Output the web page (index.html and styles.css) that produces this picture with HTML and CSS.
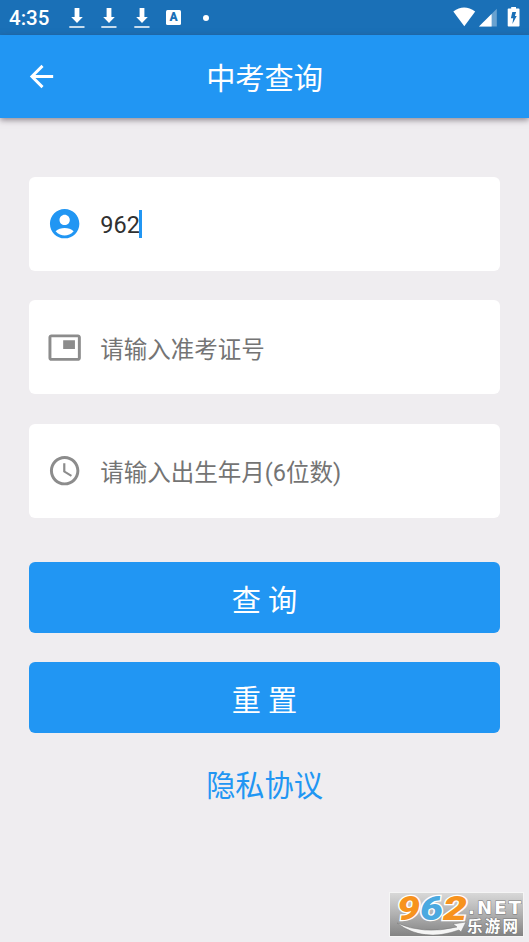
FILE: index.html
```html
<!DOCTYPE html>
<html lang="zh-CN">
<head>
<meta charset="utf-8">
<title>中考查询</title>
<link rel="stylesheet" href="styles.css">
</head>
<body>
<div class="screen">
  <div class="status">
    <span class="time">4:35</span>
    <div class="notes">
      <svg class="dl" viewBox="0 0 16 22"><path d="M5.6 0h4.8v9h3.4L8 15 2.2 9h3.4z"/><path class="dim" d="M.3 18h15.2v2H.3z"/></svg>
      <svg class="dl" viewBox="0 0 16 22"><path d="M5.6 0h4.8v9h3.4L8 15 2.2 9h3.4z"/><path class="dim" d="M.3 18h15.2v2H.3z"/></svg>
      <svg class="dl" viewBox="0 0 16 22"><path d="M5.6 0h4.8v9h3.4L8 15 2.2 9h3.4z"/><path class="dim" d="M.3 18h15.2v2H.3z"/></svg>
      <span class="abox"><span class="a">A</span></span>
      <span class="dot"></span>
    </div>
    <svg class="system" viewBox="0 0 68 22">
      <path d="M.3 4.6Q11-3.6 22.200 4.600L11.300 19.200z"/>
      <path class="faint" d="M26 19.500 43.800 1.700V19.500z"/>
      <path d="M26 19.500 38.600 6.900V19.500z"/>
      <path d="M55.500 1.500h2.700V0h4.800v1.500h2.700q.8 0 .8.800v16.400q0 .8-.8.800H55.500q-.8 0-.8-.8V2.300q0-.8.800-.8z"/>
      <path class="bolt" d="M59.300 5h3.800l-1.200 4h1.800l-4.300 8 .8-5.800h-2.300z"/>
    </svg>
  </div>
  <header class="bar">
    <svg class="back" viewBox="0 0 24 24"><path d="M20 11H7.830l5.590-5.590L12 4l-8 8 8 8 1.410-1.410L7.830 13H20v-2z"/></svg>
    <h1>中考查询</h1>
  </header>
  <main>
    <div class="field">
      <svg class="icon active" viewBox="0 0 24 24"><path d="M12 2C6.480 2 2 6.480 2 12s4.480 10 10 10 10-4.480 10-10S17.520 2 12 2zm0 4c1.930 0 3.500 1.570 3.500 3.500S13.930 13 12 13s-3.500-1.570-3.500-3.500S10.070 6 12 6zm0 14c-2.030 0-4.430-.82-6.140-2.880C7.550 15.800 9.680 15 12 15s4.450.8 6.140 2.120C16.430 19.180 14.030 20 12 20z"/></svg>
      <span class="value">962</span><span class="caret"></span>
    </div>
    <div class="field">
      <svg class="icon" viewBox="0 0 24 24"><path d="M19 7h-8v6h8V7zm2-4H3c-1.100 0-2 .9-2 2v14c0 1.100.9 1.980 2 1.980h18c1.100 0 2-.88 2-1.980V5c0-1.100-.9-2-2-2zm0 16.010H3V4.980h18v14.030z"/></svg>
      <span class="hint">请输入准考证号</span>
    </div>
    <div class="field">
      <svg class="icon" viewBox="0 0 24 24"><path d="M11.990 2C6.470 2 2 6.480 2 12s4.470 10 9.990 10C17.520 22 22 17.520 22 12S17.520 2 11.990 2zM12 20c-4.420 0-8-3.580-8-8s3.580-8 8-8 8 3.580 8 8-3.580 8-8 8zm.5-13H11v6l5.250 3.150.75-1.230-4.500-2.670z"/></svg>
      <span class="hint">请输入出生年月(6位数)</span>
    </div>
    <div class="button first">查 询</div>
    <div class="button">重 置</div>
    <div class="link">隐私协议</div>
  </main>
  <svg class="mark" viewBox="0 0 135 45">
    <defs>
      <linearGradient id="g" x1="0" y1="0" x2="0" y2="1"><stop offset="0" stop-color="#d9d9d9"/><stop offset=".5" stop-color="#b0b0b0"/><stop offset="1" stop-color="#828282"/></linearGradient>
    </defs>
    <rect class="edge" x=".5" y=".5" width="134" height="44" fill="url(#g)"/>
    <path class="swoosh" d="M8 31Q34 43 68 35l-4-3 13-2-5 10-2-2Q34 51 8 31z"/>
    <g class="num">
      <text x="8" y="28" textLength="23" lengthAdjust="spacingAndGlyphs" class="orange">9</text>
      <text x="31" y="28" textLength="23" lengthAdjust="spacingAndGlyphs" class="blue">6</text>
      <text x="54" y="28" textLength="24" lengthAdjust="spacingAndGlyphs" class="orange">2</text>
    </g>
    <text class="net" x="79" y="21.500" textLength="53" lengthAdjust="spacing">.NET</text>
    <text class="cn" x="78" y="40" textLength="51">乐游网</text>
  </svg>
</div>
</body>
</html>
```
FILE: styles.css
```css
* { box-sizing: border-box; }
body { margin: 0; background: #efedf0; font-family: Roboto, "Noto Sans CJK SC", sans-serif; }
.screen { position: relative; width: 529px; height: 942px; overflow: hidden; }
svg { display: block; flex: none; }
.status { height: 35px; background: #1a70b7; display: flex; align-items: center; padding: 0 9px 0 9px; color: #fff; }
.time { width: 60px; font-size: 20.500px; font-weight: 500; line-height: 35px; padding-top: 2px; }
.notes { display: flex; align-items: center; height: 35px; }
.dl { width: 16px; height: 22px; margin-right: 16.400px; margin-top: 3px; fill: #fff; }
.dim { opacity: .75; }
.abox { width: 15px; height: 15px; border-radius: 1.500px; background: #fff; color: #1a70b7; font-size: 12px; font-weight: 900; line-height: 15px; text-align: center; margin-top: 0; }
.dot { width: 6px; height: 6px; border-radius: 50%; background: #fff; margin-left: 22px; margin-top: 1px; }
.system { width: 68px; height: 22px; margin-left: auto; margin-right: -1px; margin-top: 1px; fill: #fff; }
.faint { opacity: .35; }
.bolt { fill: #1a70b7; }
.bar { height: 83px; background: #2196f3; box-shadow: 0 2px 6px rgba(60, 45, 60, .55); display: grid; grid-template-columns: 60px 1fr 60px; align-items: center; position: relative; }
.back { width: 35px; height: 35px; margin-left: 23.500px; fill: #fff; }
h1 { margin: 0; font-size: 29.200px; font-weight: 400; line-height: 40px; color: #fff; text-align: center; padding-top: 4px; }
main { padding: 59px 29px 0; }
.field { height: 94px; margin-bottom: 29.400px; background: #fff; border-radius: 6px; display: flex; align-items: center; padding-left: 18px; }
.icon { width: 35.300px; height: 35.300px; margin-right: 18px; fill: #8c8c8c; }
.icon.active { fill: #2196f3; }
.value, .hint { font-size: 23.500px; line-height: 34px; color: #747474; white-space: nowrap; }
.value { color: #303030; padding-top: 1px; }
.hint { padding-top: 5px; }
.caret { width: 3px; height: 28px; margin-left: -1px; background: #2196f3; }
.button { height: 71px; margin-bottom: 29px; background: #2196f3; border-radius: 6px; color: #fff; font-size: 29.200px; line-height: 78px; text-align: center; }
.button.first { margin-top: 44px; }
.link { font-size: 29.200px; line-height: 49px; color: #2196f3; text-align: center; }
.mark { position: absolute; left: 389px; top: 892px; width: 135px; height: 45px; overflow: visible; }
.edge { stroke: #f5f5f5; }
.num { font: italic 900 33px Roboto, sans-serif; paint-order: stroke; stroke: #fff; stroke-width: 2.500px; }
.orange { fill: #f7931e; }
.blue { fill: #4aa9e0; }
.swoosh { fill: #f5f5f5; stroke: #777; stroke-width: .5px; }
.net, .cn { fill: #fff; stroke: #777; stroke-width: 1px; paint-order: stroke; }
.net { font: 700 18px "DejaVu Sans", sans-serif; }
.cn { font: 700 15.500px "Noto Sans CJK SC", sans-serif; }
```
